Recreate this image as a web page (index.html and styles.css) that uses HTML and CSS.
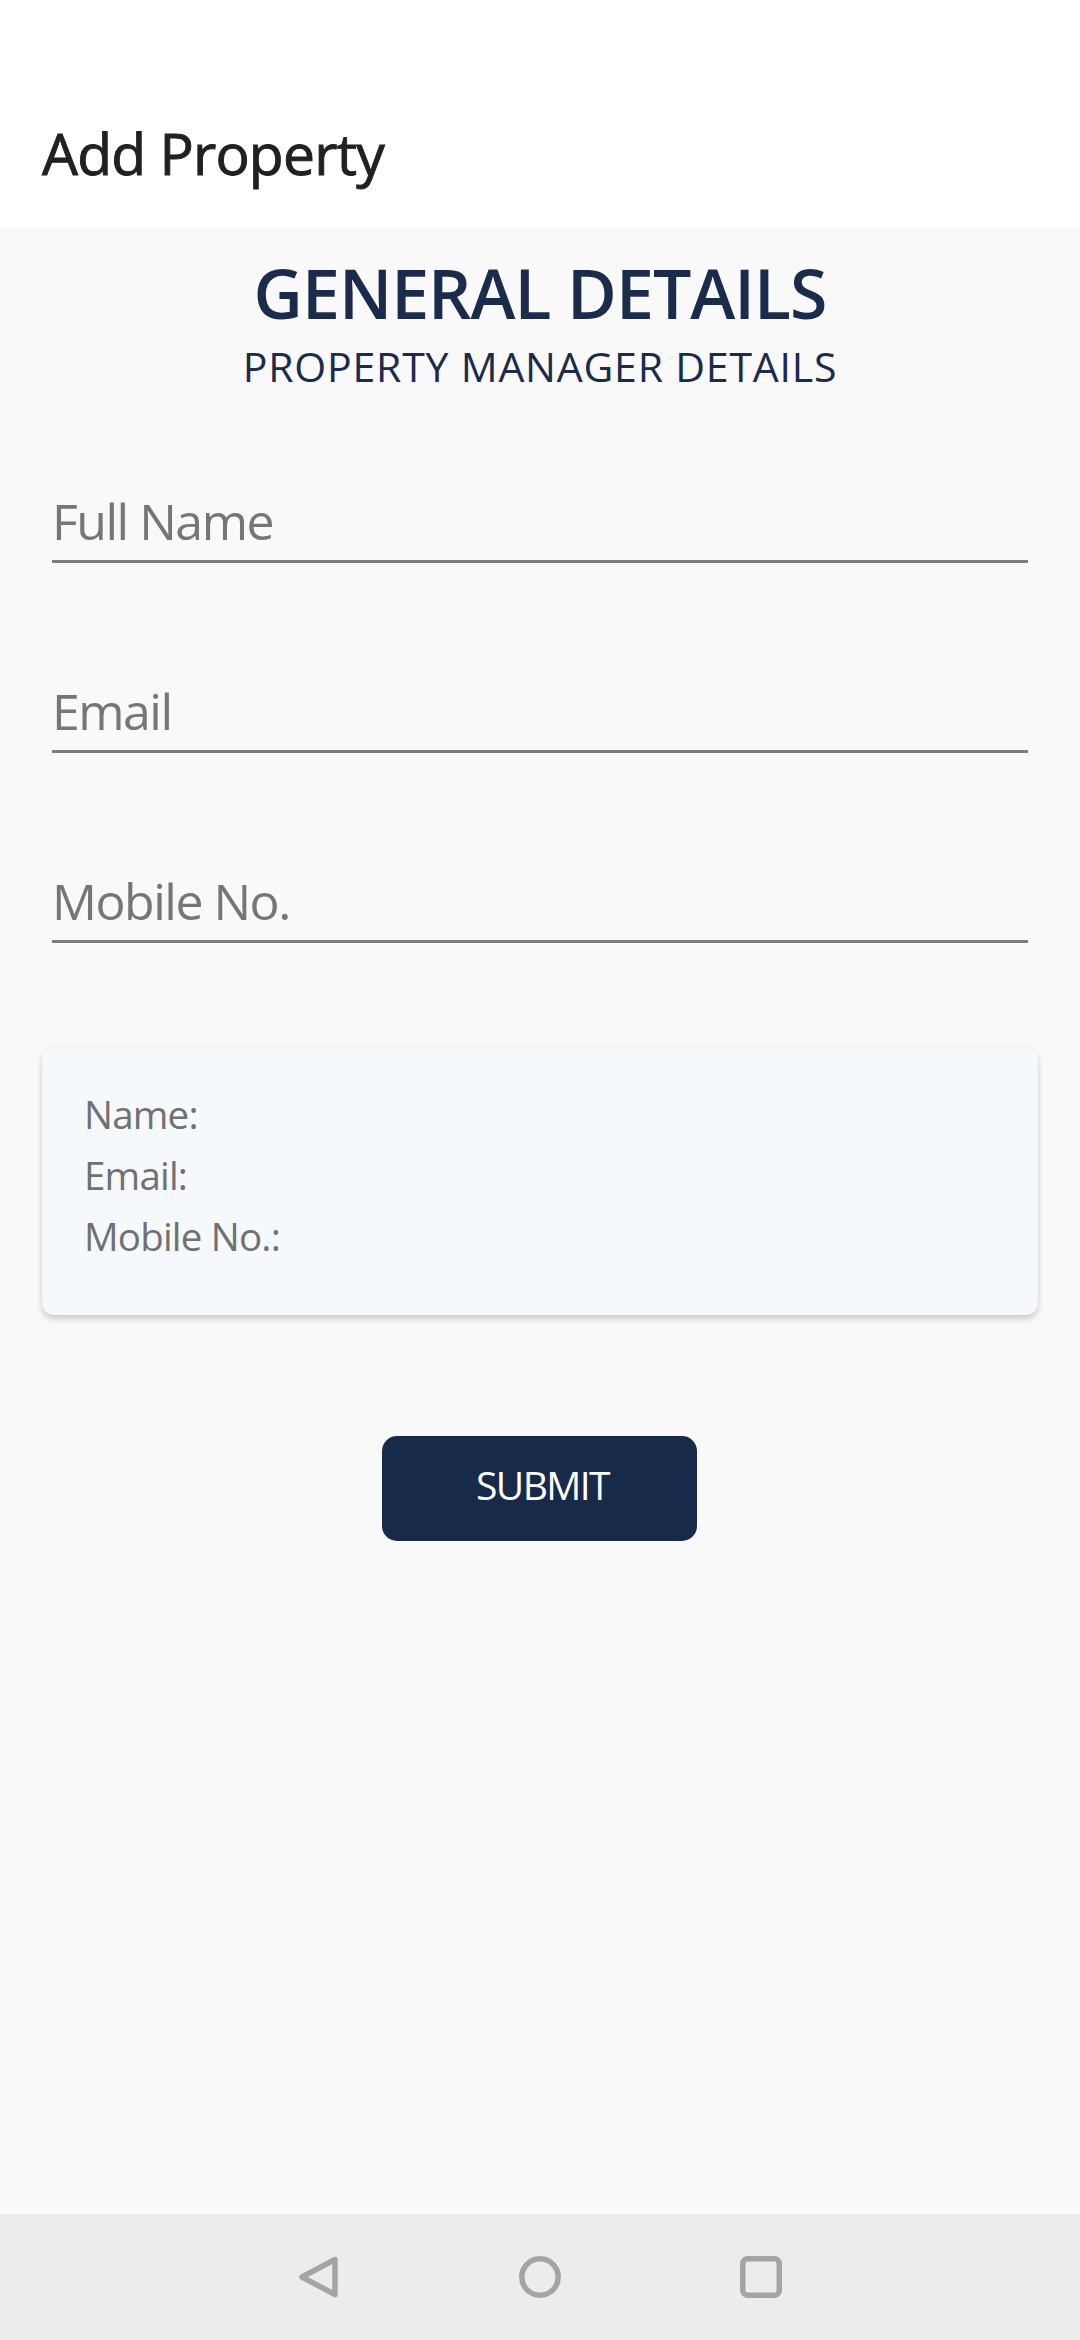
FILE: index.html
```html
<!DOCTYPE html>
<html lang="en">
<head>
<meta charset="utf-8">
<title>Add Property</title>
<link rel="stylesheet" href="styles.css">
</head>
<body>
<div class="screen">
  <header class="appbar">
    <h1 class="appbar-title">Add Property</h1>
  </header>
  <main class="content">
    <h2 class="section-title">GENERAL DETAILS</h2>
    <p class="section-subtitle">PROPERTY MANAGER DETAILS</p>

    <div class="field"><span class="field-hint">Full Name</span></div>
    <div class="field"><span class="field-hint">Email</span></div>
    <div class="field"><span class="field-hint">Mobile No.</span></div>

    <div class="summary-card">
      <div class="summary-row">Name:</div>
      <div class="summary-row">Email:</div>
      <div class="summary-row">Mobile No.:</div>
    </div>

    <div class="actions">
      <button class="submit-btn" type="button">SUBMIT</button>
    </div>
  </main>
  <nav class="navbar">
    <div class="nav-slot">
      <svg class="nav-icon" viewBox="0 0 42 42" width="42" height="42">
        <path d="M37 3.5 L4 21 L37 38.5 Z" fill="none" stroke="#a4a4a4" stroke-width="5.5" stroke-linejoin="round"/>
      </svg>
    </div>
    <div class="nav-slot">
      <svg class="nav-icon" viewBox="0 0 42 42" width="42" height="42">
        <circle cx="21" cy="21" r="18.2" fill="none" stroke="#a4a4a4" stroke-width="5.5"/>
      </svg>
    </div>
    <div class="nav-slot">
      <svg class="nav-icon" viewBox="0 0 42 42" width="42" height="42">
        <rect x="2.75" y="2.75" width="36.5" height="36.5" rx="5" fill="none" stroke="#a4a4a4" stroke-width="5.5"/>
      </svg>
    </div>
  </nav>
</div>
</body>
</html>
```

FILE: styles.css
```css
* {
  box-sizing: border-box;
}

html, body {
  margin: 0;
  padding: 0;
}

body {
  font-family: "Open Sans", "Noto Sans", sans-serif;
  background: #f9f9f9;
}

.screen {
  width: 1080px;
  height: 2340px;
  display: flex;
  flex-direction: column;
  overflow: hidden;
}

.appbar {
  background: #ffffff;
  height: 227px;
  padding: 113px 0 0 42px;
  flex: none;
}

.appbar-title {
  margin: 0;
  font-size: 57px;
  line-height: 80px;
  font-weight: 400;
  -webkit-text-stroke: 0.9px #212121;
  letter-spacing: -0.8px;
  color: #212121;
}

.content {
  flex: 1;
  padding-top: 26px;
  display: flex;
  flex-direction: column;
}

.section-title {
  margin: 0;
  text-align: center;
  font-size: 68px;
  line-height: 80px;
  font-weight: 600;
  letter-spacing: -1px;
  color: #1a2b4b;
}

.section-subtitle {
  margin: 8px 0 0;
  text-align: center;
  font-size: 41px;
  line-height: 50px;
  font-weight: 400;
  letter-spacing: 0.8px;
  color: #1a2b4b;
}

.field {
  margin: 100px 52px 0;
  padding-bottom: 9px;
  border-bottom: 3px solid #7d7d7d;
  line-height: 60px;
  font-size: 50px;
}

.field + .field {
  margin-top: 118px;
}

.field-hint {
  color: #767676;
  letter-spacing: -1.5px;
}

.summary-card {
  margin: 104px 42px 0;
  height: 268px;
  padding: 37px 44px 0 42px;
  background: #f5f9fc;
  border-radius: 12px;
  box-shadow: 0 4px 6px rgba(0, 0, 0, 0.18), 0 0 2px rgba(0, 0, 0, 0.06);
}

.summary-row {
  font-size: 38.5px;
  line-height: 61px;
  letter-spacing: -0.8px;
  color: #6f7173;
}

.actions {
  display: flex;
  justify-content: center;
  margin-top: 121px;
}

.submit-btn {
  width: 315px;
  height: 105px;
  margin-left: -1px;
  border: none;
  border-radius: 15px;
  background: #182a4a;
  color: #ffffff;
  font-family: "Open Sans", "Noto Sans", sans-serif;
  font-size: 39px;
  font-weight: 400;
  letter-spacing: -1.6px;
  line-height: 98px;
  padding: 0 0 7px 6px;
}

.navbar {
  flex: none;
  height: 126px;
  background: #ececec;
  display: flex;
  justify-content: center;
  align-items: center;
}

.nav-slot {
  width: 221px;
  display: flex;
  justify-content: center;
}

.nav-icon {
  display: block;
}
```
